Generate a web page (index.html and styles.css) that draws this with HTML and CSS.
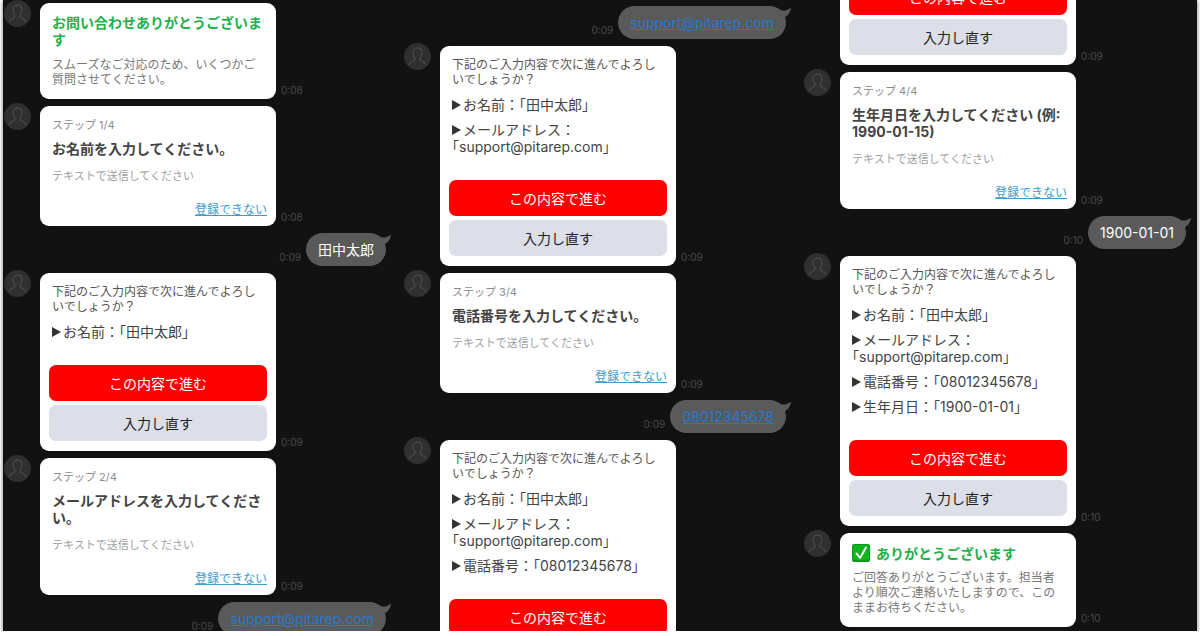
FILE: index.html
```html
<!DOCTYPE html>
<html lang="ja">
<head>
    <meta charset="UTF-8">
    <meta name="viewport" content="width=device-width, initial-scale=1.0">
    <title>トーク</title>
    <link rel="stylesheet" href="styles.css">
</head>
<body>
    <!-- Icônes partagées -->
    <svg class="defs" aria-hidden="true">
        <symbol id="person" viewBox="0 0 27 27">
            <circle cx="13.500" cy="13.500" r="13.500" fill="#303030"/>
            <path d="M5 22c1-3 3.200-3.300 5-4.400 1.300-.9 1.200-2 .5-3.300-.9-1.400-1.500-2.700-1.500-4.500 0-3 1.800-4.700 4.500-4.700s4.500 1.700 4.500 4.700c0 1.800-.6 3.100-1.500 4.500-.7 1.300-.8 2.400.5 3.300 1.800 1.100 4 1.400 5 4.400" fill="none" stroke="#4a4a4a" stroke-width="1.200"/>
        </symbol>
        <symbol id="tail" viewBox="0 0 14 14">
            <path d="M0 2c2 1 3.500 2 4.500 2.500C8 5 11.500 3.800 14 1.500c-.4 4.500-2.300 7.300-5 9L5 14z" fill="#5a5a5a"/>
        </symbol>
    </svg>

    <main class="panel">
        <div class="columns">
            <section class="column first">
                <div class="row">
                    <svg class="avatar"><use href="#person"/></svg>
                    <article class="card">
                        <h2 class="title green">お問い合わせありがとうございます</h2>
                        <p class="text gray">スムーズなご対応のため、いくつかご質問させてください。</p>
                    </article>
                    <time>0:08</time>
                </div>
                <div class="row">
                    <svg class="avatar"><use href="#person"/></svg>
                    <article class="card step">
                        <p class="label">ステップ 1/4</p>
                        <h2 class="title">お名前を入力してください。</h2>
                        <p class="hint">テキストで送信してください</p>
                        <a class="skip" href="#">登録できない</a>
                    </article>
                    <time>0:08</time>
                </div>
                <div class="row mine">
                    <time>0:09</time>
                    <div class="bubble">田中太郎<svg class="tail"><use href="#tail"/></svg></div>
                </div>
                <div class="row">
                    <svg class="avatar"><use href="#person"/></svg>
                    <article class="card confirm">
                        <p class="text">下記のご入力内容で次に進んでよろしいでしょうか？</p>
                        <ul class="items">
                            <li>お名前：「田中太郎」</li>
                        </ul>
                        <div class="actions">
                            <button class="primary" type="button">この内容で進む</button>
                            <button type="button">入力し直す</button>
                        </div>
                    </article>
                    <time>0:09</time>
                </div>
                <div class="row">
                    <svg class="avatar"><use href="#person"/></svg>
                    <article class="card step">
                        <p class="label">ステップ 2/4</p>
                        <h2 class="title">メールアドレスを入力してください。</h2>
                        <p class="hint">テキストで送信してください</p>
                        <a class="skip" href="#">登録できない</a>
                    </article>
                    <time>0:09</time>
                </div>
                <div class="row mine">
                    <time>0:09</time>
                    <div class="bubble"><a href="mailto:support@pitarep.com">support@pitarep.com</a><svg class="tail"><use href="#tail"/></svg></div>
                </div>
            </section>

            <section class="column second">
                <div class="row mine">
                    <time>0:09</time>
                    <div class="bubble"><a href="mailto:support@pitarep.com">support@pitarep.com</a><svg class="tail"><use href="#tail"/></svg></div>
                </div>
                <div class="row">
                    <svg class="avatar"><use href="#person"/></svg>
                    <article class="card confirm">
                        <p class="text">下記のご入力内容で次に進んでよろしいでしょうか？</p>
                        <ul class="items">
                            <li>お名前：「田中太郎」</li>
                            <li>メールアドレス：<br>「support@pitarep.com」</li>
                        </ul>
                        <div class="actions">
                            <button class="primary" type="button">この内容で進む</button>
                            <button type="button">入力し直す</button>
                        </div>
                    </article>
                    <time>0:09</time>
                </div>
                <div class="row">
                    <svg class="avatar"><use href="#person"/></svg>
                    <article class="card step">
                        <p class="label">ステップ 3/4</p>
                        <h2 class="title">電話番号を入力してください。</h2>
                        <p class="hint">テキストで送信してください</p>
                        <a class="skip" href="#">登録できない</a>
                    </article>
                    <time>0:09</time>
                </div>
                <div class="row mine">
                    <time>0:09</time>
                    <div class="bubble"><a href="tel:08012345678">08012345678</a><svg class="tail"><use href="#tail"/></svg></div>
                </div>
                <div class="row">
                    <svg class="avatar"><use href="#person"/></svg>
                    <article class="card confirm">
                        <p class="text">下記のご入力内容で次に進んでよろしいでしょうか？</p>
                        <ul class="items">
                            <li>お名前：「田中太郎」</li>
                            <li>メールアドレス：<br>「support@pitarep.com」</li>
                            <li>電話番号：「08012345678」</li>
                        </ul>
                        <div class="actions">
                            <button class="primary" type="button">この内容で進む</button>
                        </div>
                    </article>
                </div>
            </section>

            <section class="column third">
                <div class="row">
                    <div class="avatar"></div>
                    <article class="card">
                        <div class="actions">
                            <button class="primary" type="button">この内容で進む</button>
                            <button type="button">入力し直す</button>
                        </div>
                    </article>
                    <time>0:09</time>
                </div>
                <div class="row">
                    <svg class="avatar"><use href="#person"/></svg>
                    <article class="card step">
                        <p class="label">ステップ 4/4</p>
                        <h2 class="title">生年月日を入力してください (例: 1990-01-15)</h2>
                        <p class="hint">テキストで送信してください</p>
                        <a class="skip" href="#">登録できない</a>
                    </article>
                    <time>0:09</time>
                </div>
                <div class="row mine">
                    <time>0:10</time>
                    <div class="bubble">1900-01-01<svg class="tail"><use href="#tail"/></svg></div>
                </div>
                <div class="row">
                    <svg class="avatar"><use href="#person"/></svg>
                    <article class="card confirm">
                        <p class="text">下記のご入力内容で次に進んでよろしいでしょうか？</p>
                        <ul class="items">
                            <li>お名前：「田中太郎」</li>
                            <li>メールアドレス：<br>「support@pitarep.com」</li>
                            <li>電話番号：「08012345678」</li>
                            <li>生年月日：「1900-01-01」</li>
                        </ul>
                        <div class="actions">
                            <button class="primary" type="button">この内容で進む</button>
                            <button type="button">入力し直す</button>
                        </div>
                    </article>
                    <time>0:10</time>
                </div>
                <div class="row">
                    <svg class="avatar"><use href="#person"/></svg>
                    <article class="card done">
                        <h2 class="title green">
                            <svg class="check" viewBox="0 0 18 18" aria-hidden="true">
                                <rect width="18" height="18" rx="2" fill="#0a9a1c"/>
                                <rect x="1" y="1" width="16" height="15" rx="1" fill="#10b41c"/>
                                <path d="M4.500 9.500l3.500 4.500L14 3.500" fill="none" stroke="#fff" stroke-width="2" stroke-linecap="round" stroke-linejoin="round"/>
                            </svg>
                            ありがとうございます
                        </h2>
                        <p class="text gray">ご回答ありがとうございます。担当者より順次ご連絡いたしますので、このままお待ちください。</p>
                    </article>
                    <time>0:10</time>
                </div>
            </section>
        </div>
    </main>
</body>
</html>
```
FILE: styles.css
```css
* {
    box-sizing: border-box;
}

body {
    margin: 0;
    background-color: #fff;
    font-family: Inter, "Noto Sans CJK JP", sans-serif;
    font-size: 14px;
    line-height: 17px;
    overflow: hidden;
}

h2, p, ul {
    margin: 0;
    padding: 0;
}

.defs {
    display: none;
}

.panel {
    height: calc(100vh - 5px);
    margin: 0 3px;
    background-color: #121212;
    box-shadow: 0 1px 4px rgba(0, 0, 0, 0.6);
}

/* Les colonnes débordent du cadre pour partager toute la largeur */
.columns {
    display: grid;
    grid-template-columns: repeat(3, 1fr);
    height: 100%;
    margin: 0 -3px;
    overflow: hidden;
}

.column {
    display: flex;
    flex-direction: column;
    gap: 7px;
    min-height: 0;
    padding: 0 14px 0 4px;
}

.column > * {
    flex-shrink: 0;
}

.first {
    padding-top: 3px;
}

.second {
    padding-top: 6px;
}

.third {
    justify-content: flex-end;
    padding-bottom: 4px;
}

.row {
    display: flex;
    align-items: flex-end;
}

.avatar {
    flex: none;
    align-self: flex-start;
    width: 27px;
    height: 27px;
    margin: -3px 9px 0 0;
}

time {
    color: #4a4a4a;
    font-size: 10px;
    line-height: 12px;
    margin: 0 5px 3px;
}

/* Cartes */
.card {
    display: flex;
    flex-direction: column;
    gap: 9px;
    flex: 0 1 236px;
    padding: 11px 9px 12px 12px;
    background-color: #fff;
    border-radius: 9px;
    color: #444;
    text-spacing-trim: trim-start;
}

.title {
    font-size: 14px;
    font-weight: 700;
    line-height: 17px;
}

.green {
    color: #22b04b;
}

.text {
    font-size: 12px;
    line-height: 15px;
    padding-right: 2px;
}

.gray {
    color: #777;
}

.step {
    padding-bottom: 8px;
}

.label {
    color: #8c8c8c;
    font-size: 11px;
    margin-bottom: -3px;
}

.hint {
    margin-top: 2px;
    color: #a0a0a0;
    font-size: 11px;
}

.skip {
    align-self: flex-end;
    margin-top: 7px;
    color: #3d9bcf;
    font-size: 12px;
}

.confirm .text {
    color: #555;
}

.items {
    display: flex;
    flex-direction: column;
    gap: 8px;
    list-style: none;
}

.items li::before {
    content: "";
    display: inline-block;
    margin-right: 2px;
    border: solid transparent;
    border-width: 5px 0 5px 9px;
    border-left-color: #333;
}

.actions {
    display: flex;
    flex-direction: column;
    gap: 4px;
    margin: 16px 0 -2px -3px;
}

button {
    height: 36px;
    padding: 0;
    border: none;
    border-radius: 7px;
    background-color: #dcdee8;
    color: #222;
    font: inherit;
    cursor: pointer;
}

.primary {
    background-color: #f00;
    color: #fff;
}

.done {
    gap: 8px;
}

.done .title {
    display: flex;
    align-items: center;
    gap: 6px;
}

.check {
    width: 18px;
    height: 18px;
}

/* Messages envoyés */
.mine {
    justify-content: flex-end;
}

.bubble {
    position: relative;
    padding: 8px 12px;
    border-radius: 17px;
    background-color: #5a5a5a;
    color: #fff;
}

.bubble a {
    color: #2b78cc;
}

.tail {
    position: absolute;
    top: 0;
    right: -5px;
    width: 14px;
    height: 14px;
}
```
